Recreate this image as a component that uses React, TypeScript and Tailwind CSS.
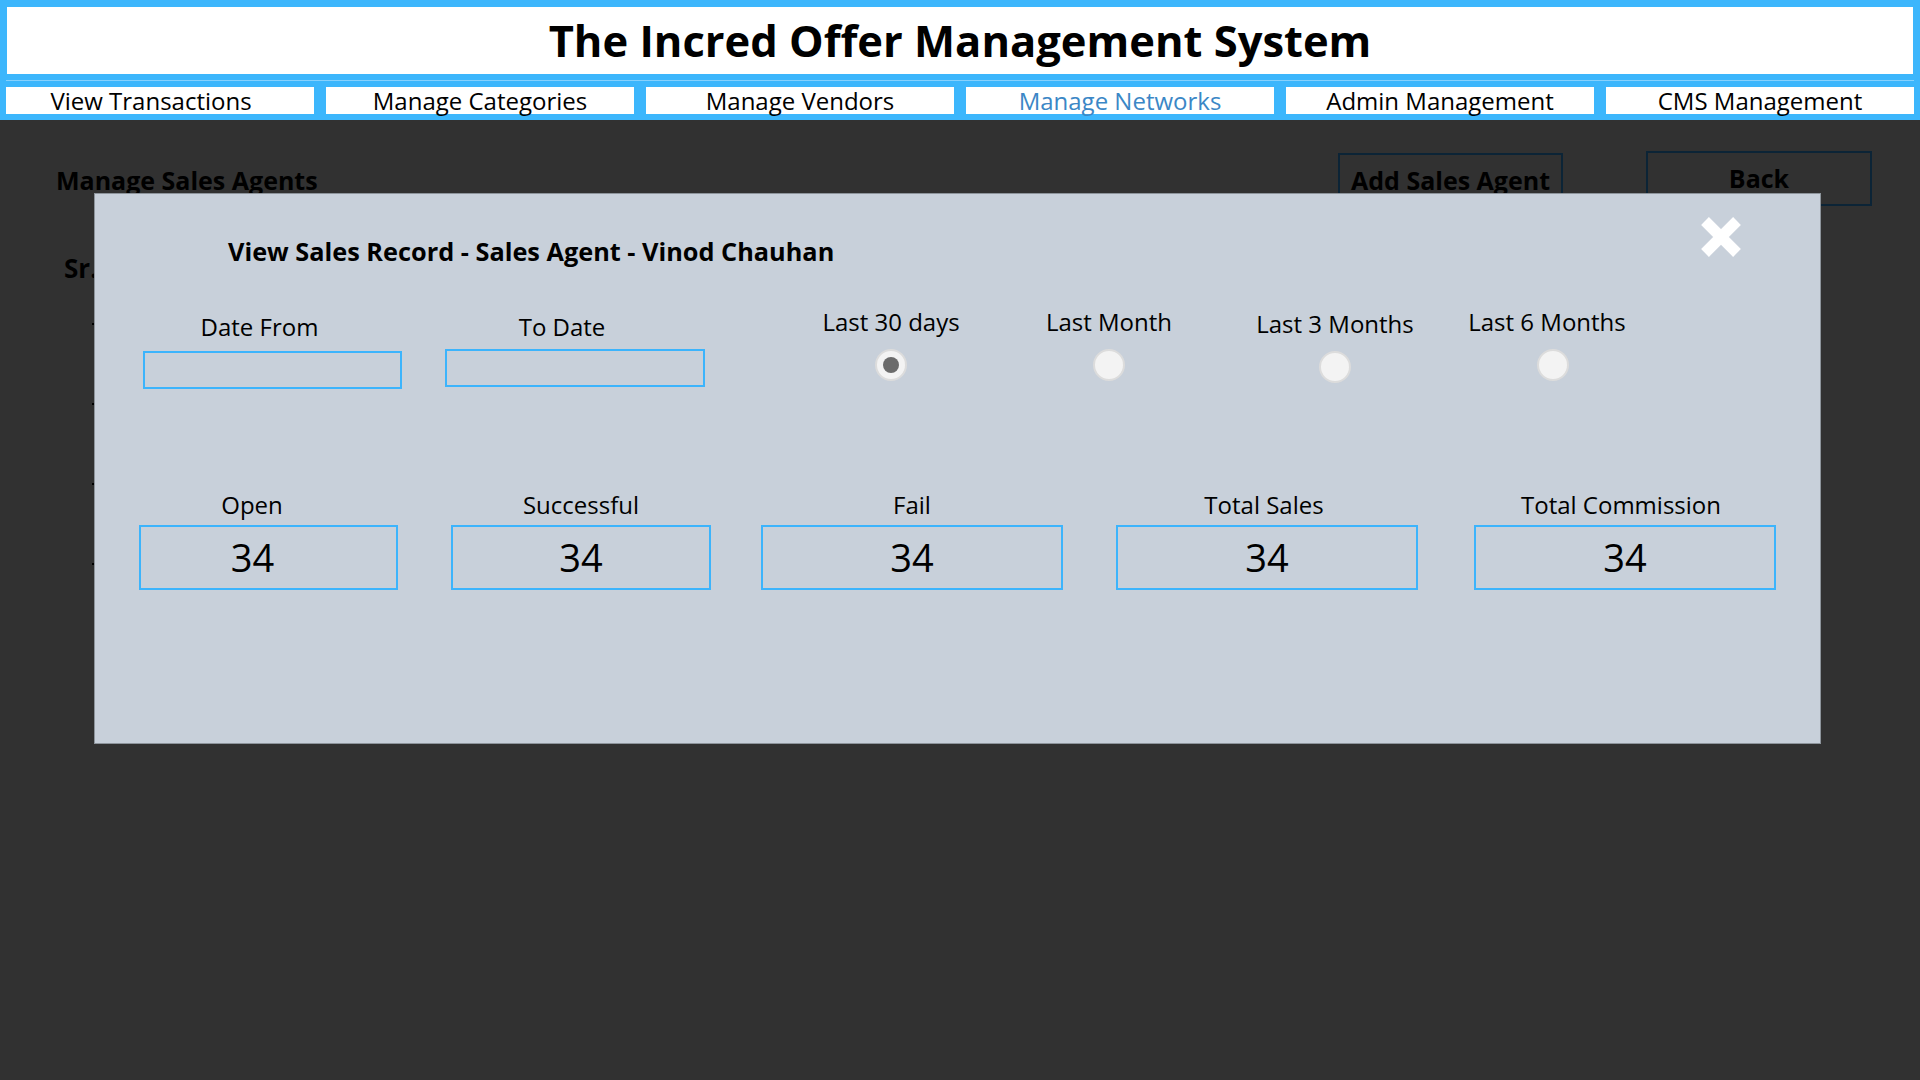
import React, { useState } from "react";

const navItems = [
  "View Transactions",
  "Manage Categories",
  "Manage Vendors",
  "Manage Networks",
  "Admin Management",
  "CMS Management",
];

const ranges = [
  { label: "Last 30 days", cls: "ml-[77px]", shift: "" },
  { label: "Last Month", cls: "", shift: "" },
  { label: "Last 3 Months", cls: "ml-[8px] pt-[2px]", shift: "" },
  { label: "Last 6 Months", cls: "", shift: "pr-[12px]" },
];

const stats = [
  { label: "Open", value: 34, cls: "w-[259px]", shift: "pr-[33px]" },
  { label: "Successful", value: 34, cls: "ml-[53px] w-[260px]", shift: "" },
  { label: "Fail", value: 34, cls: "ml-[50px] w-[302px]", shift: "" },
  { label: "Total Sales", value: 34, cls: "ml-[53px] w-[302px]", shift: "pr-[6px]" },
  { label: "Total Commission", value: 34, cls: "ml-[56px] w-[302px]", shift: "pr-[8px]" },
];

const CloseIcon = () => (
  <svg width="44" height="42" viewBox="0 0 44 42">
    <line x1="6" y1="5" x2="38" y2="37" stroke="#fff" strokeWidth="11" />
    <line x1="38" y1="5" x2="6" y2="37" stroke="#fff" strokeWidth="11" />
  </svg>
);

const SalesRecordModal = () => {
  const [range, setRange] = useState("Last 30 days");

  return (
    <div className="absolute left-[94px] top-[193px] w-[1727px] h-[551px] bg-[#c8d0da] border border-[#8d949b]">
      <button className="absolute right-[77px] top-[22px]">
        <CloseIcon />
      </button>
      <h2 className="pl-[133px] pt-[40px] text-[25.3px] font-bold leading-[34px] text-black">
        View Sales Record - Sales Agent - Vinod Chauhan
      </h2>

      <div className="mt-[38px] flex items-start pl-[48px]">
        <div className="flex w-[259px] flex-col pt-[5px]">
          <span className="pr-[26px] text-center text-[24px] leading-[32px] text-black">
            Date From
          </span>
          <input className="mt-[8px] h-[38px] border-2 border-[#3cb4fc] bg-transparent outline-none" />
        </div>
        <div className="ml-[43px] flex w-[260px] flex-col pt-[3px]">
          <span className="pr-[26px] pt-[2px] text-center text-[24px] leading-[32px] text-black">
            To Date
          </span>
          <input className="mt-[6px] h-[38px] border-2 border-[#3cb4fc] bg-transparent outline-none" />
        </div>
        {ranges.map((r) => (
          <div
            key={r.label}
            className={"flex w-[218px] flex-col items-center " + r.cls}
            onClick={() => setRange(r.label)}
          >
            <span className={"text-[24px] leading-[32px] text-black " + r.shift}>{r.label}</span>
            <span className="mt-[11px] flex h-[32px] w-[32px] items-center justify-center rounded-full border-2 border-[#dcdcdc] bg-[#f3f3f3]">
              {range === r.label && (
                <span className="h-[16px] w-[16px] rounded-full bg-[#6b6b6b]" />
              )}
            </span>
          </div>
        ))}
      </div>

      <div className="mt-[100px] flex pl-[44px]">
        {stats.map((s) => (
          <div key={s.label} className={"flex flex-col " + s.cls}>
            <span className={"text-center text-[24px] leading-[32px] text-black " + s.shift}>
              {s.label}
            </span>
            <div
              className={
                "mt-[4px] flex h-[65px] items-center justify-center border-2 border-[#3cb4fc] text-[38px] text-black " +
                (s.label === "Open" ? "pr-[32px]" : "")
              }
            >
              {s.value}
            </div>
          </div>
        ))}
      </div>
    </div>
  );
};

export default function App() {
  return (
    <div className="relative min-h-[1080px] w-[1920px] overflow-hidden bg-[#313131] font-['Open_Sans',sans-serif]">
      <header className="bg-[#3cb6fc] pb-[6px] pt-[7px]">
        <div className="mx-[7px] flex h-[67px] items-center justify-center bg-white">
          <h1 className="text-[43.5px] font-bold text-black">
            The Incred Offer Management System
          </h1>
        </div>
        <div className="mx-[6px] mt-[6px] h-px bg-[#86d1fd]" />
        <nav className="mt-[6px] grid grid-cols-6 gap-[12px] px-[6px]">
          {navItems.map((item, i) => (
            <a
              key={item}
              className={
                "h-[27px] bg-white text-center text-[24px] leading-[27px] " +
                (item === "Manage Networks" ? "text-[#3b87c6]" : "text-black")
              }
            >
              <span className={i === 0 ? "pr-[18px]" : ""}>{item}</span>
            </a>
          ))}
        </nav>
      </header>

      <main>
        <div className="flex items-start pl-[56px] pr-[48px] pt-[31px]">
          <h2 className="mt-[12px] flex-1 text-[25px] font-bold leading-[34px] text-black">
            Manage Sales Agents
          </h2>
          <button className="mt-[2px] h-[55px] w-[225px] border-2 border-[#0c2436] text-[25px] font-bold text-black">
            Add Sales Agent
          </button>
          <button className="ml-[83px] h-[55px] w-[226px] border-2 border-[#0c2436] text-[25px] font-bold text-black">
            Back
          </button>
        </div>
        <div className="mt-[43px] pl-[64px] text-[26px] font-bold leading-[35px] text-black">Sr.</div>
        <div className="mt-[37px] flex flex-col gap-[78px] pl-[92px]">
          {[1, 2, 3, 4].map((n) => (
            <span key={n} className="h-[2px] w-[2px] bg-black" />
          ))}
        </div>
      </main>

      <SalesRecordModal />
    </div>
  );
}
